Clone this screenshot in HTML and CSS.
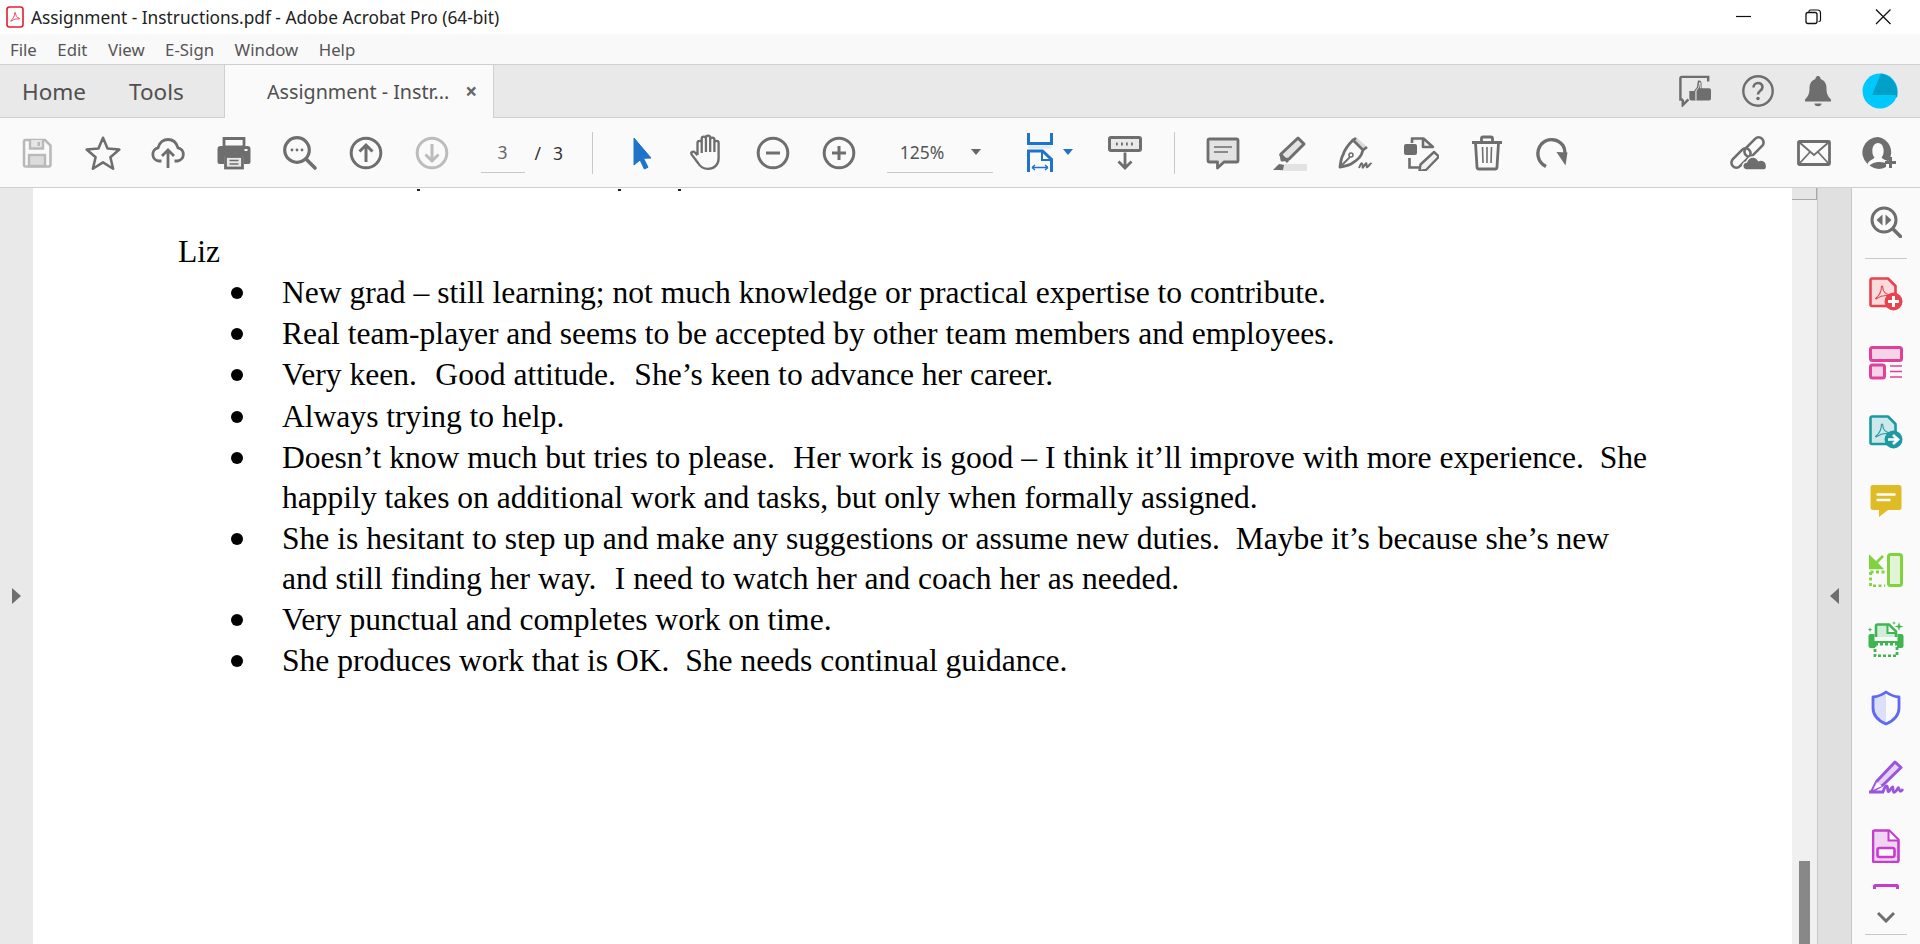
FILE: index.html
```html
<!DOCTYPE html>
<html lang="en">
<head>
<meta charset="utf-8">
<title>Assignment - Instructions.pdf - Adobe Acrobat Pro (64-bit)</title>
<link rel="stylesheet" href="styles.css">
</head>
<body>
<svg class="defs" width="0" height="0" aria-hidden="true">
  <defs>
    <symbol id="swirl" viewBox="0 0 20 20">
      <path d="M2.500 17.500C6.500 15 9.500 9 9.200 4C9.100 2 11 2 11 4C11 8.500 14 12.500 17.500 13C19 13.200 19 14.600 17.400 14.500C13 14 8 14.800 4 18C2.400 19.200 1.400 18.400 2.500 17.500Z" fill="none" stroke="currentColor" stroke-width="1.400"/>
    </symbol>
  </defs>
</svg>

<header class="titlebar">
  <svg class="appicon" viewBox="0 0 18 22"><rect x="1" y="1" width="16" height="20" rx="2.500" fill="#fff" stroke="#e2202c" stroke-width="1.600"/><use href="#swirl" x="3.500" y="5" width="11" height="11" color="#e2202c"/></svg>
  <span class="apptitle">Assignment - Instructions.pdf - Adobe Acrobat Pro (64-bit)</span>
  <div class="winctl">
    <svg class="winbtn" viewBox="0 0 68 34"><path d="M23 16.500h15" stroke="#111" stroke-width="1.200"/></svg>
    <svg class="winbtn" viewBox="0 0 68 34"><g transform="translate(-2 0)"><rect x="27" y="12.500" width="11" height="11" rx="2" fill="none" stroke="#111" stroke-width="1.300"/><path d="M30 12V11.500a1.500 1.500 0 0 1 1.500-1.500h7a3 3 0 0 1 3 3v7a1.500 1.500 0 0 1-1.500 1.500h-.5" fill="none" stroke="#111" stroke-width="1.200"/></g></svg>
    <svg class="winbtn" viewBox="0 0 68 34"><path d="M27 9.500l14.500 14.500M41.500 9.500L27 24" stroke="#111" stroke-width="1.300"/></svg>
  </div>
</header>

<nav class="menubar">
  <span class="menuitem">File</span><span class="menuitem">Edit</span><span class="menuitem">View</span><span class="menuitem">E-Sign</span><span class="menuitem">Window</span><span class="menuitem">Help</span>
</nav>

<div class="tabbar">
  <span class="navtab home">Home</span>
  <span class="navtab tools">Tools</span>
  <div class="doctab"><span class="doctab-name">Assignment - Instr...</span><span class="doctab-close">×</span></div>
  <div class="tabicons">
    <svg class="ic" viewBox="0 0 36 34" width="34" height="32"><path d="M5 26H2.500V3.500a1.500 1.500 0 0 1 1.500-1.500h28v5M5 26v6l6-6" fill="none" stroke="#6e6e6e" stroke-width="2.600"/><path d="M12 17h5l3-4 1-7c3-1 5 1 4 8h8a2 2 0 0 1 2 2v9a2 2 0 0 1-2 2H14a2 2 0 0 1-2-2z" fill="#6e6e6e"/><path d="M19 17l3-4 1-5c1 0 1.500 1 1 6" fill="none" stroke="#e9e9e9" stroke-width="1"/><path d="M19 17v10" stroke="#e9e9e9" stroke-width="1.200"/></svg>
    <svg class="ic" viewBox="0 0 32 32" width="32" height="32"><circle cx="16" cy="16" r="14.700" fill="none" stroke="#6e6e6e" stroke-width="2.400"/><path d="M11.500 12.500C11.500 6.500 20.500 6.500 20.500 12c0 4-4.500 3.500-4.500 7.500" fill="none" stroke="#6e6e6e" stroke-width="2.600"/><circle cx="16" cy="23.500" r="1.800" fill="#6e6e6e"/></svg>
    <svg class="ic" viewBox="0 0 28 32" width="28" height="32"><path d="M14 1a2.500 2.500 0 0 1 2.500 3C21 5.500 22.500 9 22.500 13.500c0 6 2 8.500 4.500 11v2H1v-2c2.500-2.500 4.500-5 4.500-11C5.500 9 7 5.500 11.500 4A2.500 2.500 0 0 1 14 1z" fill="#6e6e6e"/><path d="M10.500 28.500h7a3.500 2.800 0 0 1-7 0z" fill="#6e6e6e"/></svg>
    <svg class="ic avatar" viewBox="0 0 36 36" width="36" height="36"><circle cx="18" cy="18" r="17.500" fill="#00c8ff"/><path d="M19 .6L10 22h23.300l1.700 3C37 16 33 3.500 19 .6z" fill="#00a0c8"/></svg>
  </div>
</div>

<div class="toolbar">
  <span class="tool"><svg viewBox="0 0 32 32" width="32" height="32" class="ic"><path d="M3 4.500A1.500 1.500 0 0 1 4.500 3H24l5.500 5.500V28A1.500 1.500 0 0 1 28 29.500H4.500A1.500 1.500 0 0 1 3 28z" fill="#fafafa" stroke="#b9b9b9" stroke-width="2.600"/><path d="M9 3v8.500h13V3" fill="#e6e6e6" stroke="#b9b9b9" stroke-width="2.400"/><rect x="16.500" y="5" width="2.500" height="4" fill="#b9b9b9"/><rect x="8" y="18" width="16" height="11" fill="#dcdcdc" stroke="#b9b9b9" stroke-width="2.400"/></svg></span>
  <span class="tool"><svg viewBox="0 0 36 36" width="38" height="38" class="ic"><path d="M18 3.500l4.300 10.300 11.200.9-8.500 7.300 2.600 10.900L18 26.900 8.400 32.900 11 22 2.500 14.700l11.200-.9z" fill="none" stroke="#6e6e6e" stroke-width="2.400" stroke-linejoin="round"/></svg></span>
  <span class="tool"><svg viewBox="0 0 36 36" width="36" height="36" class="ic"><path d="M11.500 26H9A6.700 6.700 0 0 1 8 12.800C9.500 7 14 4.500 18 4.500c5 0 8.500 3.500 10 8.300A6.700 6.700 0 0 1 27.500 26H24.500" fill="none" stroke="#6e6e6e" stroke-width="2.800"/><path d="M18 33V15M12 21l6-6 6 6" fill="none" stroke="#6e6e6e" stroke-width="2.800"/></svg></span>
  <span class="tool"><svg viewBox="0 0 34 34" width="34" height="34" class="ic"><path d="M7 2.500h20V11H7z" fill="#fafafa" stroke="#6e6e6e" stroke-width="2.800"/><path d="M3.500 10h27A3 3 0 0 1 33.500 13v13a2 2 0 0 1-2 2H27V20H7v8H2.500a2 2 0 0 1-2-2V13a3 3 0 0 1 3-3z" fill="#6e6e6e"/><rect x="27.500" y="13" width="3" height="2" fill="#fafafa"/><rect x="8.500" y="20.500" width="17" height="11.500" fill="#e9e9e9" stroke="#6e6e6e" stroke-width="2.800"/><path d="M12.500 24.500h9M12.500 28h9" stroke="#6e6e6e" stroke-width="1.500"/></svg></span>
  <span class="tool"><svg viewBox="0 0 36 36" width="36" height="36" class="ic"><circle cx="15" cy="15" r="12.300" fill="none" stroke="#6e6e6e" stroke-width="3.200"/><path d="M24 24l9 9" stroke="#6e6e6e" stroke-width="3.600" stroke-linecap="round"/><circle cx="10" cy="15" r="1.400" fill="#6e6e6e"/><circle cx="15" cy="15" r="1.400" fill="#6e6e6e"/><circle cx="20" cy="15" r="1.400" fill="#6e6e6e"/></svg></span>
  <span class="tool"><svg viewBox="0 0 34 34" width="34" height="34" class="ic"><circle cx="17" cy="17" r="14.800" fill="none" stroke="#6e6e6e" stroke-width="3"/><path d="M17 26V9M10.500 15.500L17 9l6.500 6.500" fill="none" stroke="#6e6e6e" stroke-width="3"/></svg></span>
  <span class="tool"><svg viewBox="0 0 34 34" width="34" height="34" class="ic"><circle cx="17" cy="17" r="14.800" fill="none" stroke="#bcbcbc" stroke-width="3"/><path d="M17 8v17M10.500 18.500L17 25l6.500-6.500" fill="none" stroke="#bcbcbc" stroke-width="3"/></svg></span>
  <div class="pagebox">
    <span class="pageinput">3</span><span class="pagesep">/</span><span class="pagetotal">3</span>
  </div>
  <span class="vsep first"></span>
  <span class="tool cursor"><svg viewBox="0 0 34 34" width="34" height="34" class="ic"><path d="M10 2l17 20-7.500.3 4.500 9-3.700 1.700-4.200-9L10 29z" fill="#1f74c9" stroke="#1f74c9" stroke-width="1" stroke-linejoin="round"/></svg></span>
  <span class="tool"><svg viewBox="0 0 36 36" width="38" height="38" class="ic"><path d="M9 20V8.500a2 2 0 0 1 4 0V18M13 17V4.500a2 2 0 0 1 4 0V17M17 17V3.500a2 2 0 0 1 4 0V17M21 17V5.500a2 2 0 0 1 4 0V17M25 17V8.500a2 2 0 0 1 4 0V23c0 6-4 10-10 10-5 0-7.500-2-9.500-5.500L3.500 19.500c-1.300-2 1.300-3.700 3-2L9 20" fill="none" stroke="#6e6e6e" stroke-width="2.200" stroke-linejoin="round"/></svg></span>
  <span class="tool"><svg viewBox="0 0 34 34" width="34" height="34" class="ic"><circle cx="17" cy="17" r="14.800" fill="none" stroke="#6e6e6e" stroke-width="3"/><path d="M10 17h14" stroke="#6e6e6e" stroke-width="3"/></svg></span>
  <span class="tool"><svg viewBox="0 0 34 34" width="34" height="34" class="ic"><circle cx="17" cy="17" r="14.800" fill="none" stroke="#6e6e6e" stroke-width="3"/><path d="M10 17h14M17 10v14" stroke="#6e6e6e" stroke-width="3"/></svg></span>
  <div class="zoombox"><span class="zoomval">125%</span><span class="caret gray"></span></div>
  <span class="fit"><svg viewBox="0 0 26 40" width="26" height="40" class="ic"><path d="M1.500 0v10.500h23V0" fill="none" stroke="#1f74c9" stroke-width="3"/><rect x="1.500" y="12.500" width="23" height="3" fill="#dce8f5"/><path d="M1.500 39V18h14l9 8.500V39" fill="none" stroke="#1f74c9" stroke-width="3"/><path d="M15 18v9h9" fill="none" stroke="#1f74c9" stroke-width="2"/><path d="M5 34.500h16M5 34.500l3-2.500M5 34.500l3 2.500M21 34.500l-3-2.500M21 34.500l-3 2.500" fill="none" stroke="#1f74c9" stroke-width="1.400"/></svg><span class="caret blue"></span></span>
  <span class="tool read"><svg viewBox="0 0 34 34" width="34" height="34" class="ic"><rect x="1.500" y="1.500" width="31" height="13" rx="1.500" fill="#e9e9e9" stroke="#6e6e6e" stroke-width="3"/><path d="M8 8h1.800M13 8h1.800M18 8h1.800M23 8h1.800" stroke="#6e6e6e" stroke-width="3"/><path d="M17 16.500V32M10.500 25.500L17 32l6.500-6.500" fill="none" stroke="#6e6e6e" stroke-width="2.800"/></svg></span>
  <span class="vsep second"></span>
  <span class="tool"><svg viewBox="0 0 34 34" width="34" height="34" class="ic"><path d="M3.500 3h27A1.500 1.500 0 0 1 32 4.500v20a1.500 1.500 0 0 1-1.500 1.500H18l-6.500 6v-6h-8A1.500 1.500 0 0 1 2 24.500v-20A1.500 1.500 0 0 1 3.500 3z" fill="#e3e3e3" stroke="#6e6e6e" stroke-width="2.800" stroke-linejoin="round"/><path d="M8 11h18M8 16h14" stroke="#6e6e6e" stroke-width="1.600"/></svg></span>
  <span class="tool"><svg viewBox="0 0 36 36" width="36" height="36" class="ic"><rect x="9" y="29" width="27" height="7" fill="#e3e3e3"/><path d="M27 3l6 6-15 15-7 1-1-6z" fill="#e3e3e3" stroke="#6e6e6e" stroke-width="3" stroke-linejoin="round"/><path d="M9 19l8 8" stroke="#6e6e6e" stroke-width="3"/><path d="M2 35l6-6 5 1-1 5z" fill="#6e6e6e"/></svg></span>
  <span class="tool"><svg viewBox="0 0 36 36" width="36" height="36" class="ic"><path d="M19 2l10 9-3 4-9-9z" fill="#d9d9d9"/><path d="M16 5l10 10c-1.500 6-4 9-12 14-2 1-5 2-11 3 1-6 1-9 3-12C8 13 12 9 16 5z" fill="none" stroke="#6e6e6e" stroke-width="2.800" stroke-linejoin="round"/><path d="M19 3l-4 3M26 15l4-3" stroke="#6e6e6e" stroke-width="2.800"/><path d="M5 30l8-8" stroke="#6e6e6e" stroke-width="1.800"/><circle cx="14" cy="20" r="2" fill="none" stroke="#6e6e6e" stroke-width="1.600"/><path d="M22 33c2-5 3-6 3.500-3s-.5 4 1.500 1 2.500-4 2.500-1 0 3 2 1 2-3 3-2" fill="none" stroke="#6e6e6e" stroke-width="2"/></svg></span>
  <span class="tool"><svg viewBox="0 0 36 36" width="36" height="36" class="ic"><path d="M9 8V3.500h11.500L30 12H20V4" fill="#f2f2f2" stroke="#6e6e6e" stroke-width="2.600" stroke-linejoin="round"/><rect x="1" y="9" width="13" height="11" rx="2" fill="#6e6e6e"/><path d="M6.500 23v9.500H16" fill="none" stroke="#6e6e6e" stroke-width="2.600"/><path d="M31 17l5 4.500-13 13.500-6.500 1 1-6.500z" fill="#f2f2f2" stroke="#6e6e6e" stroke-width="2.400" stroke-linejoin="round"/></svg></span>
  <span class="tool"><svg viewBox="0 0 34 36" width="34" height="36" class="ic"><path d="M2 7.500h30M11.500 7V3.500a1.500 1.500 0 0 1 1.500-1.500h8a1.500 1.500 0 0 1 1.500 1.500V7" fill="none" stroke="#6e6e6e" stroke-width="2.800"/><path d="M5.500 8l1.500 24a2 2 0 0 0 2 2h16a2 2 0 0 0 2-2l1.500-24" fill="none" stroke="#6e6e6e" stroke-width="2.800"/><path d="M12.500 12l.5 16M17 12v16M21.500 12l-.5 16" stroke="#6e6e6e" stroke-width="1.600"/></svg></span>
  <span class="tool"><svg viewBox="0 0 34 34" width="34" height="34" class="ic"><path d="M11 30.500C2 26 .5 15 6.500 8 12.500 1.500 23 2.500 28 9.500c1.300 2 2 4.500 2 8" fill="none" stroke="#6e6e6e" stroke-width="3.400"/><path d="M21.500 16l11 .5-2 13z" fill="#6e6e6e"/></svg></span>
  <div class="toolright">
    <span class="tool"><svg viewBox="0 0 38 34" width="38" height="34" class="ic"><g fill="none" stroke="#6e6e6e" stroke-width="2.600"><rect x="-11.500" y="-5" width="23" height="10" rx="5" transform="translate(11 22) rotate(-45)"/><rect x="-11.500" y="-5" width="23" height="10" rx="5" transform="translate(24 11) rotate(-45)"/></g><path d="M17 34a4 4 0 0 1-.5-8C18 22 21 20.500 24 21c2 .3 3.500 1.500 4.500 3.500C32 23 36 25 36.500 29c.5 3-.5 5-2.500 5z" fill="#6e6e6e" stroke="#fafafa" stroke-width="1.500"/></svg></span>
    <span class="tool"><svg viewBox="0 0 34 26" width="34" height="26" class="ic"><rect x="1.500" y="1.500" width="31" height="23" rx="1" fill="none" stroke="#6e6e6e" stroke-width="2.800"/><path d="M2 2l15 13L32 2M2 24l11-12M32 24L21 12" fill="none" stroke="#6e6e6e" stroke-width="1.800"/></svg></span>
    <span class="tool"><svg viewBox="0 0 36 34" width="36" height="34" class="ic"><path d="M16 1a15.500 15.500 0 0 0-10.500 27C7 24 11 24 12.500 21.500 9 18 9.500 7 16 7s7 11 3.500 14.500C21 23.500 24 24 25.500 25h1A15.500 15.500 0 0 0 16 1zM7.500 29.500A15.500 15.500 0 0 0 24 31V27c-2.500-1-7-1-8-1s-6 1-8.500 3.500z" fill="#6e6e6e"/><path d="M28.500 21v11M23 26.500h11" stroke="#6e6e6e" stroke-width="3"/></svg></span>
  </div>
</div>

<main class="workspace">
  <div class="gutter-left"><span class="arrow right"></span></div>
  <article class="page">
    <div class="cutline"><i class="frag f1"></i><i class="frag f2"></i><i class="frag f3"></i></div>
    <p class="name">Liz</p>
    <ul class="notes">
      <li>New grad – still learning; not much knowledge or practical expertise to contribute.</li>
      <li>Real team-player and seems to be accepted by other team members and employees.</li>
      <li>Very keen.&nbsp;&#8202; Good attitude.&nbsp;&#8202; She’s keen to advance her career.</li>
      <li>Always trying to help.</li>
      <li>Doesn’t know much but tries to please.&nbsp;&#8202; Her work is good – I think it’ll improve with more experience.&nbsp; She happily takes on additional work and tasks, but only when formally assigned.</li>
      <li>She is hesitant to step up and make any suggestions or assume new duties.&nbsp; Maybe it’s because she’s new and still finding her way.&nbsp;&#8202; I need to watch her and coach her as needed.</li>
      <li>Very punctual and completes work on time.</li>
      <li>She produces work that is OK.&nbsp; She needs continual guidance.</li>
    </ul>
  </article>
  <div class="scrollbar"><span class="scroll-top"></span><span class="scroll-thumb"></span></div>
  <div class="gutter-right"><span class="arrow left"></span></div>
  <aside class="rail">
    <span class="railtop"><svg viewBox="0 0 32 32" width="32" height="32"><circle cx="14" cy="14" r="12" fill="none" stroke="#6e6e6e" stroke-width="3"/><path d="M23 23l7.500 7.500" stroke="#6e6e6e" stroke-width="3.600" stroke-linecap="round"/><path d="M12.500 8.500v11L6.500 14zM15.500 8.500v11l6-5.500z" fill="#6e6e6e"/></svg></span>
    <span class="railsep"></span>
    <div class="railtools">
      <span class="railtool"><svg viewBox="0 0 34 34" width="34" height="34"><path d="M3 1.500h16l7.500 7.500v20H3a1.500 1.500 0 0 1-1.500-1.500V3A1.500 1.500 0 0 1 3 1.500z" fill="#f9dadd" stroke="#e8424f" stroke-width="2.600" stroke-linejoin="round"/><use href="#swirl" x="5" y="7" width="16" height="16" color="#e8424f"/><circle cx="24.500" cy="24.500" r="9" fill="#e8424f"/><path d="M24.500 19v11M19 24.500h11" stroke="#fff" stroke-width="3"/></svg></span>
      <span class="railtool"><svg viewBox="0 0 34 34" width="34" height="34"><rect x="1.500" y="1.500" width="31" height="13" rx="2" fill="#f6d3e6" stroke="#e0409a" stroke-width="3"/><rect x="1.500" y="19" width="14" height="13" rx="2" fill="#f6d3e6" stroke="#e0409a" stroke-width="3"/><path d="M21 20h12M21 25.500h12M21 31h12" stroke="#e0409a" stroke-width="1.500"/></svg></span>
      <span class="railtool"><svg viewBox="0 0 34 34" width="34" height="34"><path d="M3 1.500h16l7.500 7.500v20H3a1.500 1.500 0 0 1-1.500-1.500V3A1.500 1.500 0 0 1 3 1.500z" fill="#cde8ea" stroke="#1c9aa2" stroke-width="2.600" stroke-linejoin="round"/><use href="#swirl" x="5" y="7" width="16" height="16" color="#1c9aa2"/><circle cx="24.500" cy="24.500" r="9" fill="#1c9aa2"/><path d="M19 24.500h8M24 20l5 4.500-5 4.500" fill="none" stroke="#fff" stroke-width="2.600"/></svg></span>
      <span class="railtool"><svg viewBox="0 0 32 34" width="32" height="34"><path d="M3 1h26a2.500 2.500 0 0 1 2.500 2.500v20a2.500 2.500 0 0 1-2.500 2.500H18l-9 7v-7H3a2.500 2.500 0 0 1-2.500-2.500v-20A2.500 2.500 0 0 1 3 1z" fill="#dfbb26"/><path d="M6.500 10.500h19M6.500 16h14" stroke="#fff" stroke-width="2.500"/></svg></span>
      <span class="railtool"><svg viewBox="0 0 34 34" width="34" height="34"><rect x="19.500" y="1.500" width="13" height="31" rx="2" fill="#e3f3d6" stroke="#7fd33f" stroke-width="3"/><path d="M14 3L6 11M1 4v11h11l-4-4-3-3z" fill="#7fd33f" stroke="#7fd33f" stroke-width="2.600"/><path d="M1.500 19v14h14.500M1.500 19h14.500" fill="none" stroke="#7fd33f" stroke-width="2.800" stroke-dasharray="3 2.500"/></svg></span>
      <span class="railtool"><svg viewBox="0 0 36 36" width="36" height="36"><path d="M8 16V5a1.500 1.500 0 0 1 1.500-1.500H21l7 7V16" fill="#d2edd8" stroke="#3fb650" stroke-width="2.600"/><path d="M19.500 4v8h8" fill="#fafafa" stroke="#3fb650" stroke-width="2"/><path d="M2.500 13h4v7h23v-7h4a2 2 0 0 1 2 2v10a2 2 0 0 1-2 2H29v-5H7v5H2.500a2 2 0 0 1-2-2V15a2 2 0 0 1 2-2z" fill="#3fb650"/><rect x="7" y="23" width="22" height="12" fill="none" stroke="#3fb650" stroke-width="2.800" stroke-dasharray="3 2"/><path d="M31 1l1 3.500 3.500 1-3.500 1-1 3.500-1-3.500-3.500-1 3.500-1zM2 6l.6 2 2 .6-2 .6-.6 2-.6-2-2-.6 2-.6zM26 0l.5 1.500L28 2l-1.500.5L26 4l-.5-1.500L24 2l1.500-.5z" fill="#3fb650"/></svg></span>
      <span class="railtool"><svg viewBox="0 0 30 36" width="30" height="36"><path d="M15 2c4 3 8 4.500 13 5v11c0 8-6 13-13 16z" fill="#fafafa"/><path d="M15 2C11 5 7 6.500 2 7v11c0 8 6 13 13 16z" fill="#dcdffa"/><path d="M15 2c4 3 8 4.500 13 5v11c0 8-6 13-13 16C8 31 2 26 2 18V7c5-.5 9-2 13-5z" fill="none" stroke="#5f6af0" stroke-width="2.800" stroke-linejoin="round"/></svg></span>
      <span class="railtool"><svg viewBox="0 0 36 34" width="36" height="34"><path d="M27 2l6 5.500L15 25 4 31l5-10z" fill="#e6d4f6" stroke="#9a55dc" stroke-width="3" stroke-linejoin="round"/><path d="M5 30l4-8 5 4z" fill="#fafafa"/><path d="M1 32h15" stroke="#9a55dc" stroke-width="3"/><path d="M15 32c2-6 4-8 4.500-4s0 5 2.500 2 3-5 3-1 1 4 3 2 2-5 3-2 2 3 4 0" fill="none" stroke="#9a55dc" stroke-width="2.800"/></svg></span>
      <span class="railtool"><svg viewBox="0 0 28 34" width="28" height="34"><path d="M2.500 1.500H17l9.500 9.500v20.500a1.500 1.500 0 0 1-1.500 1.500H2.500A1.500 1.500 0 0 1 1 31.500V3a1.500 1.500 0 0 1 1.500-1.500z" fill="#efd5f1" stroke="#c53ccf" stroke-width="2.600" stroke-linejoin="round"/><path d="M16.500 2v9.500H26" fill="#fafafa" stroke="#c53ccf" stroke-width="2"/><rect x="5.500" y="19" width="17" height="9" rx="2" fill="#fafafa" stroke="#c53ccf" stroke-width="2.600"/></svg></span>
      <span class="railclip"></span>
    </div>
    <span class="railmore"><svg viewBox="0 0 20 12" width="20" height="12"><path d="M2 2l8 8 8-8" fill="none" stroke="#6e6e6e" stroke-width="3"/></svg></span>
    <span class="railsep bottom"></span>
  </aside>
</main>
</body>
</html>
```

FILE: styles.css
```css
* { box-sizing: border-box; }
html, body { margin: 0; height: 100%; }
body {
  display: flex;
  flex-direction: column;
  height: 944px;
  overflow: hidden;
  background: #fff;
  font-family: "Noto Sans", "Open Sans", sans-serif;
  color: #505050;
}
.defs { display: block; height: 0; }
.ic { display: block; }

/* title bar */
.titlebar {
  height: 34px;
  flex: none;
  display: flex;
  align-items: center;
  padding-left: 6px;
  background: #fff;
}
.appicon { width: 18px; height: 22px; flex: none; }
.apptitle {
  margin-left: 7px;
  font-size: 17.3px;
  color: #222;
}
.winctl { margin-left: auto; display: flex; padding-right: 3px; }
.winbtn { width: 68px; height: 34px; display: block; }

/* menu */
.menubar {
  height: 31px;
  flex: none;
  display: flex;
  align-items: center;
  background: #f9f9f9;
  border-bottom: 1px solid #cfcfcf;
  padding-left: 10px;
  gap: 20.5px;
  font-size: 16.8px;
  color: #555;
}

/* tabs */
.tabbar {
  height: 53px;
  flex: none;
  display: flex;
  align-items: stretch;
  background: #e9e9e9;
  border-bottom: 1px solid #cfcfcf;
}
.navtab {
  display: flex;
  align-items: center;
  font-size: 22.5px;
  color: #505050;
}
.home { margin-left: 22px; width: 107px; }
.tools { width: 95px; }
.doctab {
  width: 270px;
  margin-bottom: -1px;
  display: flex;
  align-items: center;
  background: #fafafa;
  border-left: 1px solid #cfcfcf;
  border-right: 1px solid #cfcfcf;
  padding-left: 42px;
}
.doctab-name { font-size: 19.7px; color: #505050; white-space: nowrap; }
.doctab-close { margin-left: 16px; font-size: 21px; font-weight: 700; color: #666; line-height: 1; }
.tabicons {
  margin-left: auto;
  display: flex;
  align-items: center;
  padding-right: 22px;
  gap: 30px;
}

/* toolbar */
.toolbar {
  height: 70px;
  flex: none;
  display: flex;
  align-items: center;
  background: #fafafa;
  border-bottom: 1px solid #cfcfcf;
  padding-left: 4px;
}
.tool { width: 65.8px; flex: none; display: flex; justify-content: center; align-items: center; }
.pagebox {
  width: 119px;
  flex: none;
  display: flex;
  align-items: center;
  padding-left: 16px;
  font-size: 17.5px;
}
.pageinput {
  width: 44px;
  height: 40px;
  display: flex;
  align-items: center;
  justify-content: center;
  border-bottom: 1px solid #c8c8c8;
  color: #666;
}
.pagesep { margin-left: 10px; color: #333; }
.pagetotal { margin-left: 12px; color: #333; }
.vsep { width: 1px; height: 42px; background: #c8c8c8; flex: none; }
.vsep.first { margin-left: 8px; }
.vsep.second { margin-left: 16px; margin-right: 16px; }
.tool.cursor { margin-left: 16px; }
.zoombox {
  width: 106px;
  height: 40px;
  margin-left: 15px;
  flex: none;
  display: flex;
  align-items: center;
  border-bottom: 1px solid #c8c8c8;
  padding-left: 13px;
  font-size: 17.5px;
  color: #555;
}
.zoomval { width: 71px; }
.caret { width: 0; height: 0; flex: none; border-left: 5.500px solid transparent; border-right: 5.500px solid transparent; border-top: 6px solid #666; }
.caret.blue { border-top-color: #1f74c9; margin-left: 10px; margin-bottom: 2px; }
.fit { margin-left: 34px; display: flex; align-items: center; flex: none; width: 55px; }
.read { margin-left: 10px; }
.toolright { margin-left: auto; display: flex; padding-right: 7px; }

/* workspace */
.workspace { flex: 1; min-height: 0; display: flex; }
.gutter-left {
  width: 33px;
  flex: none;
  background: #e9e9e9;
  display: flex;
  align-items: center;
  justify-content: center;
  padding-top: 60px;
}
.arrow { width: 0; height: 0; border-top: 8px solid transparent; border-bottom: 8px solid transparent; }
.arrow.right { border-left: 9px solid #6e6e6e; }
.arrow.left { border-right: 9px solid #6e6e6e; }
.page {
  flex: 1;
  min-width: 0;
  background: #fff;
  color: #000;
  font-family: "Liberation Serif", "Times New Roman", serif;
  font-size: 31.57px;
}
.cutline { height: 2px; margin-top: 1px; display: flex; }
.frag { display: block; width: 3px; height: 2px; background: #222; }
.f1 { margin-left: 384px; }
.f2 { margin-left: 198px; }
.f3 { margin-left: 57px; }
.name { margin: 40px 0 0 145px; height: 42px; line-height: 41px; }
.notes { list-style: none; margin: 0 0 0 249px; padding: 0; width: 1372px; }
.notes li { position: relative; line-height: 40px; margin-bottom: 1.2px; }
.notes li::before {
  content: "";
  position: absolute;
  left: -51px;
  top: 14px;
  width: 12px;
  height: 12px;
  border-radius: 50%;
  background: #000;
}
.scrollbar {
  width: 25px;
  flex: none;
  background: #f0f0f0;
  display: flex;
  flex-direction: column;
  align-items: center;
}
.scroll-top {
  width: 25px;
  height: 12px;
  flex: none;
  background: #e6e6e6;
  border-bottom: 1px solid #aaa;
  border-right: 1px solid #aaa;
}
.scroll-thumb { width: 11px; height: 83px; margin-top: auto; background: #888; }
.gutter-right {
  width: 35px;
  flex: none;
  background: #e0e0e0;
  border-left: 1px solid #c8c8c8;
  border-right: 1px solid #c8c8c8;
  display: flex;
  align-items: center;
  justify-content: center;
  padding-top: 60px;
}
.rail {
  width: 68px;
  flex: none;
  background: #fafafa;
  display: flex;
  flex-direction: column;
  align-items: center;
  overflow: hidden;
}
.railtop { height: 34px; margin-top: 17px; display: flex; align-items: center; }
.railsep { width: 42px; height: 1px; background: #c8c8c8; flex: none; margin-top: 19px; }
.railsep.bottom { margin-top: 11px; }
.railtools {
  height: 645px;
  display: flex;
  flex-direction: column;
  align-items: center;
  flex: none;
  overflow: hidden;
}
.railtool { height: 69px; flex: none; display: flex; align-items: center; justify-content: center; }
.railclip { width: 26px; height: 5px; flex: none; border: 3px solid #c53ccf; border-bottom: 0; border-radius: 3px 3px 0 0; margin-top: 4px; }
.railmore { height: 12px; display: flex; flex: none; margin-top: 7px; }
```
